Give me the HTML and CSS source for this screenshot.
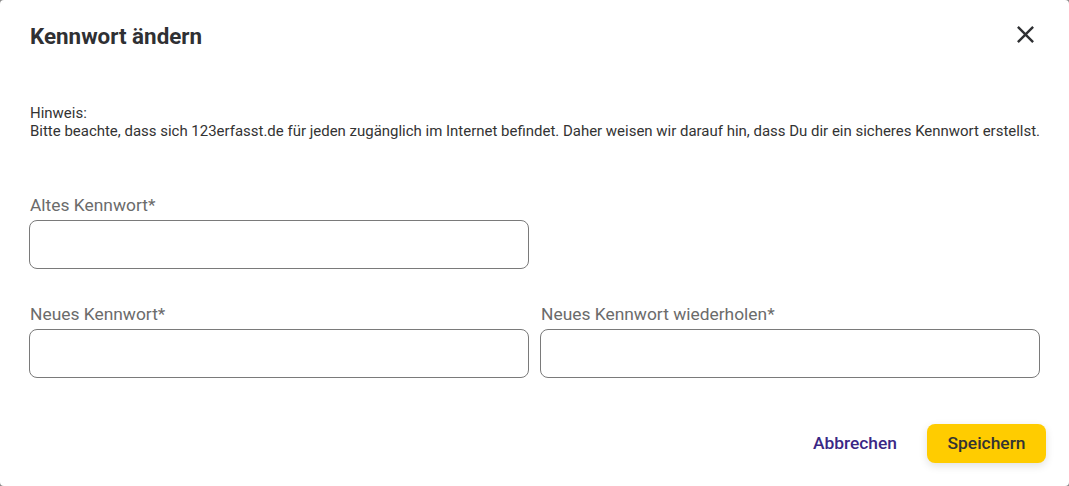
FILE: index.html
```html
<!DOCTYPE html>
<html lang="de">
<head>
  <meta charset="UTF-8">
  <meta name="viewport" content="width=device-width, initial-scale=1.0">
  <title>Kennwort ändern</title>
  <link rel="stylesheet" href="styles.css">
</head>
<body>

  <section class="dialog">
    <div class="dialog-header">
      <h2>Kennwort ändern</h2>
      <button class="close-btn" type="button" aria-label="Schließen">
        <svg width="24" height="24" viewBox="0 0 24 24">
          <path d="M19 6.41 17.59 5 12 10.59 6.41 5 5 6.41 10.59 12 5 17.59 6.41 19 12 13.41 17.59 19 19 17.59 13.41 12z" fill="currentColor"/>
        </svg>
      </button>
    </div>

    <p class="hint">
      Hinweis:<br>
      Bitte beachte, dass sich 123erfasst.de für jeden zugänglich im Internet befindet. Daher weisen wir darauf hin, dass Du dir ein sicheres Kennwort erstellst.
    </p>

    <form class="pw-form">
      <div class="form-row">
        <div class="form-group">
          <label for="old-pw">Altes Kennwort*</label>
          <input type="password" id="old-pw">
        </div>
      </div>

      <div class="form-row">
        <div class="form-group">
          <label for="new-pw">Neues Kennwort*</label>
          <input type="password" id="new-pw">
        </div>
        <div class="form-group">
          <label for="repeat-pw">Neues Kennwort wiederholen*</label>
          <input type="password" id="repeat-pw">
        </div>
      </div>
    </form>

    <div class="dialog-actions">
      <button type="button" class="btn-cancel">Abbrechen</button>
      <button type="submit" class="btn-save">Speichern</button>
    </div>
  </section>

</body>
</html>
```

FILE: styles.css
```css
/* General Styles */
* {
  margin: 0;
  padding: 0;
  box-sizing: border-box;
  font-family: Roboto, "Liberation Sans", Arial, sans-serif;
}

body {
  background-color: #8a8a8a;
  height: 100vh;
}

.dialog {
  background-color: white;
  height: 486px;
  border-radius: 4px;
  padding: 18px 29px 0 29px;
}

.dialog-header {
  display: flex;
  justify-content: space-between;
  align-items: center;
  height: 36px;
}

.dialog-header h2 {
  font-size: 22.4px;
  font-weight: 700;
  color: #2f3033;
  padding-left: 1px;
}

.close-btn {
  background: none;
  border: none;
  color: #2f3033;
  cursor: pointer;
  display: flex;
  margin-right: 0;
  margin-top: -4px;
}

.close-btn svg {
  width: 29px;
  height: 29px;
}

.hint {
  margin-top: 50px;
  font-size: 14.97px;
  line-height: 18px;
  color: #333;
  padding-left: 1px;
  white-space: nowrap;
}

.pw-form {
  margin-top: 55px;
}

.form-row {
  display: grid;
  grid-template-columns: 1fr 1fr;
  gap: 11px;
  margin-bottom: 35px;
}

.form-group label {
  display: block;
  font-size: 17.4px;
  line-height: 20px;
  color: #6b6b6b;
  margin-bottom: 5px;
  padding-left: 1px;
}

.form-group input {
  width: 100%;
  height: 49px;
  border: 1px solid #7a7a7a;
  border-radius: 8px;
  outline: none;
  padding: 0 12px;
  font-size: 16px;
}

.dialog-actions {
  display: flex;
  justify-content: flex-end;
  align-items: center;
  gap: 14px;
  margin-top: 45px;
  margin-right: -6px;
}

.btn-cancel {
  background: none;
  border: none;
  color: #3a2785;
  font-size: 17.4px;
  font-weight: 500;
  padding: 10px 16px;
  cursor: pointer;
}

.btn-save {
  background-color: #ffcc00;
  color: #333;
  border: none;
  border-radius: 8px;
  font-size: 17.4px;
  font-weight: 500;
  height: 39px;
  width: 119px;
  cursor: pointer;
  box-shadow: 0 3px 8px rgba(0, 0, 0, 0.12);
}
```
